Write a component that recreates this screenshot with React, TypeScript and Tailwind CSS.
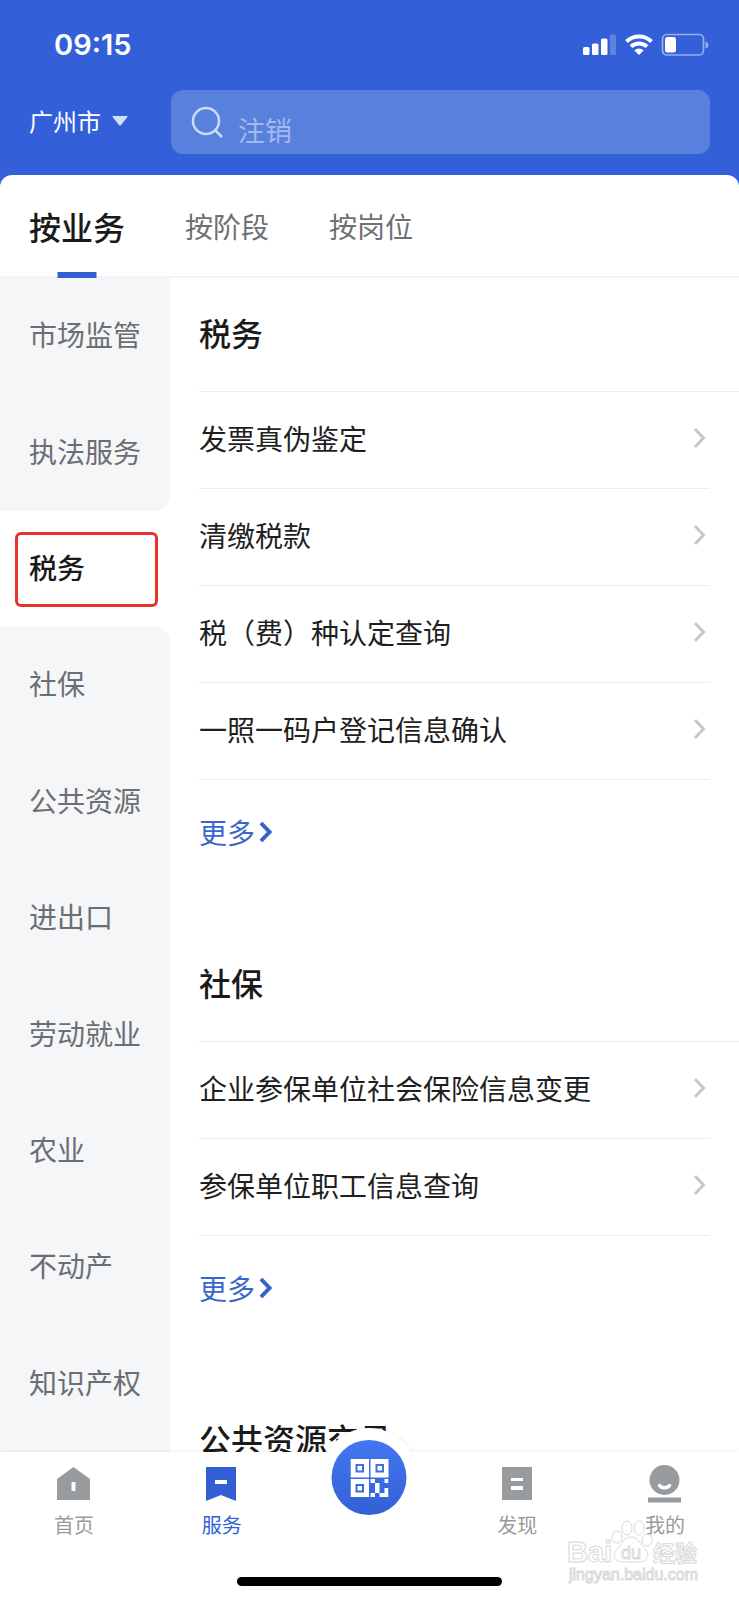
import { useState } from "react";

const TABS = ["按业务", "按阶段", "按岗位"];

const CATEGORIES = [
  "市场监管", "执法服务", "税务", "社保", "公共资源",
  "进出口", "劳动就业", "农业", "不动产", "知识产权",
];

interface Section {
  title: string;
  items: string[];
}

const SECTIONS: Section[] = [
  { title: "税务", items: ["发票真伪鉴定", "清缴税款", "税（费）种认定查询", "一照一码户登记信息确认"] },
  { title: "社保", items: ["企业参保单位社会保险信息变更", "参保单位职工信息查询"] },
  { title: "公共资源交易", items: [] },
];

function StatusBar() {
  return (
    <div className="flex h-[90px] items-center justify-between pl-[54px] pr-[30px]">
      <span className="font-['Inter','Noto_Sans_CJK_SC',sans-serif] text-[29px] font-semibold leading-8 text-white">09:15</span>
      <svg width="127" height="24" viewBox="0 0 127 24" fill="#fff" aria-hidden="true">
        <rect x="1" y="14" width="6.500" height="8" rx="1.500" />
        <rect x="10" y="10.500" width="6.500" height="11.500" rx="1.500" />
        <rect x="19" y="5.500" width="6.500" height="16.500" rx="1.500" />
        <rect x="28" y="1.500" width="6" height="20.500" rx="1.500" opacity=".22" />
        <g fill="none" stroke="#fff" strokeWidth="4">
          <path d="M44.500 8.500a18 18 0 0 1 25 0" />
          <path d="M49 13.600a11.600 11.600 0 0 1 16 0" />
        </g>
        <path d="M57 22l-4.600-4.600a6.800 6.800 0 0 1 9.200 0z" />
        <rect x="80.500" y="1.500" width="41" height="20.500" rx="4.500" fill="none" stroke="#fff" strokeWidth="1.700" opacity=".5" />
        <rect x="83" y="4" width="11" height="15.500" rx="2.500" />
        <path d="M123.500 8.500c4 1 4 6 0 7z" opacity=".5" />
      </svg>
    </div>
  );
}

function Chevron({ className }: { className: string }) {
  return (
    <svg width="14" height="22" viewBox="0 0 14 22" fill="none" className={className} aria-hidden="true">
      <path d="M2 2l8.500 9L2 20" />
    </svg>
  );
}

function CategoryGroup({ items, className, onPick }: { items: string[]; className: string; onPick: (name: string) => void }) {
  return (
    <div className={`flex flex-col bg-[#f4f6f8] ${className}`}>
      {items.map(name => (
        <button key={name} onClick={() => onPick(name)} className="flex-1 pb-1 pl-[29px] text-left text-[28px] leading-9 text-[#6b6e73]">
          {name}
        </button>
      ))}
    </div>
  );
}

function QrIcon() {
  return (
    <svg width="38" height="38" viewBox="0 0 38 38" aria-hidden="true">
      {[[0, 0], [20, 0], [0, 20]].map(([x, y]) => (
        <g key={`${x}-${y}`}>
          <rect x={x + 2.5} y={y + 2.5} width="13.500" height="13.500" fill="none" stroke="#fff" strokeWidth="5" />
          <rect x={x + 7} y={y + 7} width="4.500" height="4.500" fill="#fff" />
        </g>
      ))}
      <g fill="#fff">
        <path d="M20 20h4.500v4H20zM24.500 24h4.500v10h-4.500zM20 34h4.500v4H20z" />
        <path d="M34 20h4v4h-4zM34 29h4v9h-9v-4h5z" />
      </g>
    </svg>
  );
}

function HomeIcon() {
  return (
    <svg width="34" height="34" viewBox="0 0 34 34" fill="currentColor" aria-hidden="true">
      <path fillRule="evenodd" d="M16.500 0L33 12v21H0V12zM14.500 15v9h4v-9z" />
    </svg>
  );
}

function ServiceIcon() {
  return (
    <svg width="34" height="34" viewBox="0 0 34 34" fill="currentColor" aria-hidden="true">
      <path fillRule="evenodd" d="M1 0h30v34l-15-6-15 6zM10 13v4h12v-4z" />
    </svg>
  );
}

function DiscoverIcon() {
  return (
    <svg width="34" height="34" viewBox="0 0 34 34" fill="currentColor" aria-hidden="true">
      <path fillRule="evenodd" d="M2 0h30v33H2zM11 11v3h12v-3zM11 19v4h12v-4z" />
    </svg>
  );
}

function MineIcon() {
  return (
    <svg width="34" height="34" viewBox="0 0 34 34" fill="currentColor" className="overflow-visible" aria-hidden="true">
      <circle cx="16.500" cy="13" r="15" />
      <path d="M11.500 18.500c2 3 8 3 10 0" fill="none" stroke="#fff" strokeWidth="3.500" strokeLinecap="round" />
      <path d="M0 30.500h33v5H0z" />
    </svg>
  );
}

const NAV = [
  { label: "首页", icon: <HomeIcon /> },
  { label: "服务", icon: <ServiceIcon /> },
  null,
  { label: "发现", icon: <DiscoverIcon /> },
  { label: "我的", icon: <MineIcon /> },
];

function BottomNav() {
  return (
    <nav className="relative shrink-0 bg-white shadow-[0_-1px_4px_rgba(0,0,0,0.06)]">
      <div className="grid grid-cols-5">
        {NAV.map((item, i) =>
          item ? (
            <a
              key={item.label}
              href="#"
              className={`flex flex-col items-center gap-2 pt-[15px] text-[20px] leading-8 ${i === 1 ? "text-[#335fd6]" : "text-[#989c9e]"}`}
            >
              {item.icon}
              {item.label}
            </a>
          ) : (
            <div key="scan" className="relative">
              <div className="absolute -top-6 left-1/2 size-24 -translate-x-1/2 rounded-full bg-white shadow-[0_-1px_4px_rgba(0,0,0,0.06)]" />
              <div className="absolute inset-0 bg-white" />
              <button
                aria-label="扫码"
                className="absolute -top-3 left-1/2 flex size-[75px] -translate-x-1/2 items-center justify-center rounded-full bg-linear-to-b from-[#4377f0] to-[#3460d4]"
              >
                <QrIcon />
              </button>
            </div>
          )
        )}
      </div>
      <div className="flex h-[59px] items-end justify-center pb-[14px]">
        <div className="h-[9px] w-[265px] rounded-full bg-black" />
      </div>
      <Watermark />
    </nav>
  );
}

function Watermark() {
  return (
    <svg
      width="140"
      height="70"
      viewBox="0 0 140 70"
      className="pointer-events-none absolute bottom-[14px] right-[34px] font-['Liberation_Sans','Noto_Sans_CJK_SC',sans-serif]"
      fill="#fff"
      stroke="#d8d8d8"
      strokeWidth="1"
      aria-hidden="true"
    >
      <g fill="none">
        <ellipse cx="52" cy="21" rx="5" ry="6" />
        <ellipse cx="62" cy="12" rx="5" ry="7" />
        <ellipse cx="74" cy="12" rx="5" ry="7" />
        <ellipse cx="82" cy="24" rx="5" ry="6" />
      </g>
      <path d="M66 21c8 0 9 8 14 12 6 6 2 13-6 13-5 0-11 0-16 0-8 0-12-7-6-13 5-4 6-12 14-12z" />
      <text x="2" y="46" fontSize="29" fontWeight="700">Bai</text>
      <text x="56" y="43" fontSize="18">du</text>
      <text x="88" y="45" fontSize="22" fontWeight="700">经验</text>
      <text x="4" y="64" fontSize="16">jingyan.baidu.com</text>
    </svg>
  );
}

export default function App() {
  const [tab, setTab]       = useState("按业务");
  const [active, setActive] = useState("税务");
  const at = CATEGORIES.indexOf(active);

  return (
    <div className="flex h-screen flex-col overflow-hidden bg-[#335fd9] font-['Noto_Sans_CJK_SC',sans-serif]">
      <header className="shrink-0">
        <StatusBar />
        <div className="flex items-center pb-[21px] pl-[29px] pr-[29px]">
          <button className="flex w-[142px] items-center gap-[11px] pb-0.5 text-[24px] leading-8 text-white">
            广州市
            <svg width="16" height="10" viewBox="0 0 16 10" fill="#d3defa" aria-hidden="true">
              <path d="M1 0h14q1 0 .4 1L8.800 9.300q-.8.900-1.600 0L.6 1Q0 0 1 0z" />
            </svg>
          </button>
          <label className="flex h-16 flex-1 items-center gap-[15px] rounded-xl bg-[#5880dd] pl-5">
            <svg width="32" height="32" viewBox="0 0 32 32" fill="none" stroke="#ccd9f7" strokeWidth="2.500" aria-hidden="true">
              <circle cx="15" cy="15" r="13" />
              <path d="M24 24l7 7" />
            </svg>
            <input
              type="search"
              aria-label="搜索"
              placeholder="注销"
              className="min-w-0 flex-1 bg-transparent pt-4 text-[27px] leading-9 text-white outline-none placeholder:text-[#a4b9ec]"
            />
          </label>
        </div>
      </header>

      <div className="flex shrink-0 gap-[60px] rounded-t-xl border-b-2 border-[#f3f4f5] bg-white pl-[29px]">
        {TABS.map(name => (
          <button
            key={name}
            onClick={() => setTab(name)}
            className={`relative h-[101px] leading-10 ${tab === name ? "text-[32px] font-medium text-[#1a1a1a]" : "text-[28px] text-[#6e7073]"}`}
          >
            {name}
            {tab === name && <span className="absolute -bottom-0.5 left-1/2 h-1.5 w-[39px] -translate-x-1/2 bg-[#335fd0]" />}
          </button>
        ))}
      </div>

      <div className="flex min-h-0 flex-1 bg-white">
        <aside className="flex w-[170px] shrink-0 flex-col">
          <CategoryGroup items={CATEGORIES.slice(0, at)} onPick={setActive} className="flex-[2] rounded-br-2xl" />
          <div className="flex flex-1 items-center pl-[15px] pr-3">
            <button className="h-[75px] flex-1 rounded-md border-[3px] border-[#e8312a] pb-1 pl-[11px] text-left text-[28px] font-medium leading-9 text-[#1a1a1a]">
              {active}
            </button>
          </div>
          <CategoryGroup items={CATEGORIES.slice(at + 1)} onPick={setActive} className="flex-[7] rounded-tr-2xl pb-[10px]" />
        </aside>

        <main className="min-w-0 flex-1 overflow-hidden pl-[29px]">
          {SECTIONS.map(section => (
            <section key={section.title} className="pb-[41px]">
              <h2 className="border-b border-[#ebecee] pb-[39px] pt-[34px] text-[32px] font-medium leading-10 text-[#1a1a1a]">{section.title}</h2>
              <ul className="pr-[29px]">
                {section.items.map(item => (
                  <li key={item} className="border-b border-[#ebecee]">
                    <a href="#" className="flex h-24 items-center justify-between pb-1 pr-[3px] text-[28px] leading-9 text-[#1f1f1f]">
                      {item}
                      <Chevron className="stroke-[#c5c8cb] stroke-3" />
                    </a>
                  </li>
                ))}
              </ul>
              {section.items.length > 0 && (
                <a href="#" className="flex h-[107px] items-center gap-1 pb-[3px] text-[28px] leading-9 text-[#3a66cc]">
                  更多
                  <Chevron className="stroke-[#3460cc] stroke-4" />
                </a>
              )}
            </section>
          ))}
        </main>
      </div>

      <BottomNav />
    </div>
  );
}
